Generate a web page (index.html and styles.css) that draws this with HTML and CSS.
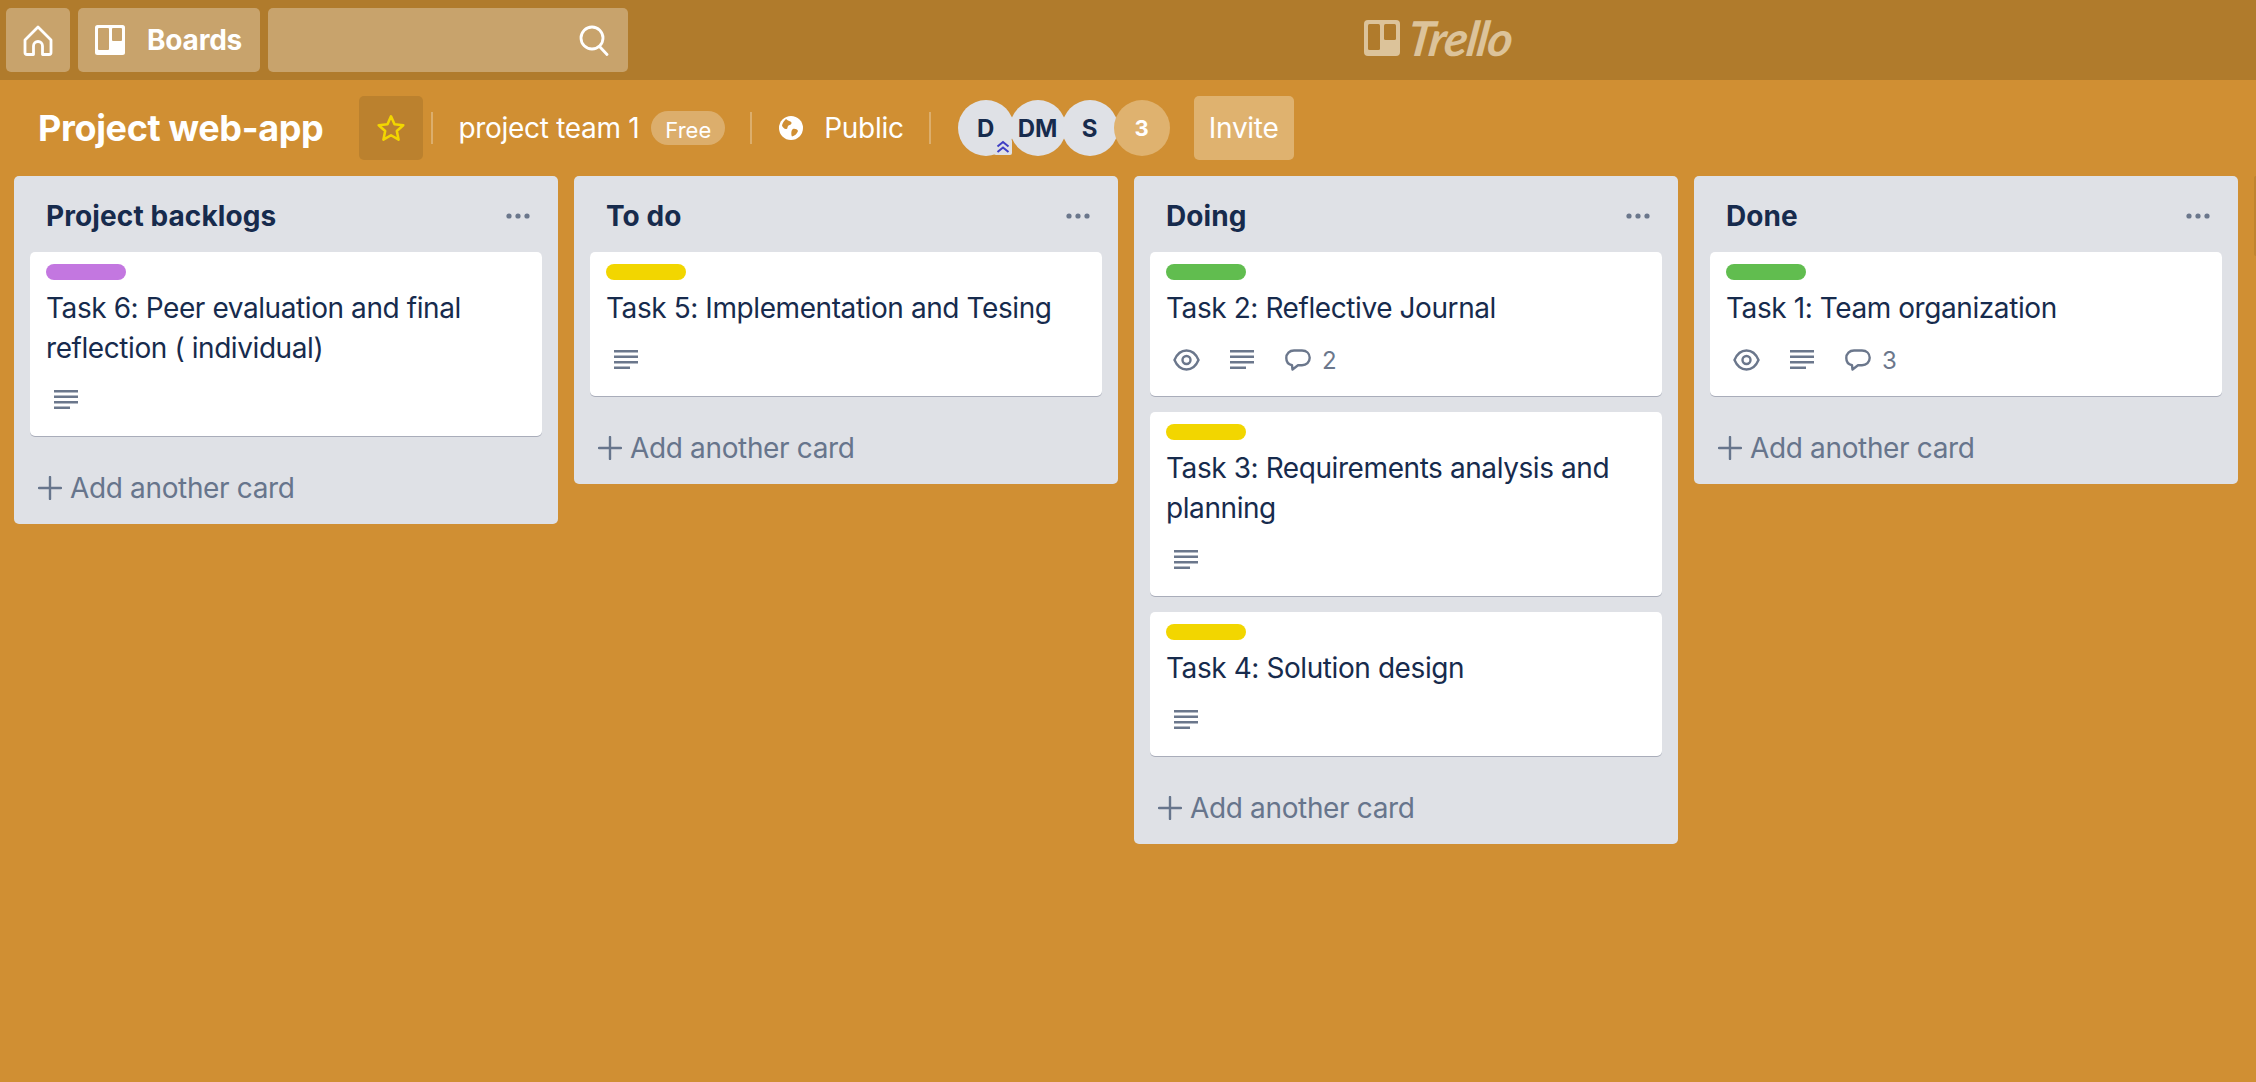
FILE: index.html
```html
<!DOCTYPE html>
<html lang="en">
<head>
    <meta charset="UTF-8">
    <title>Project web-app | Trello</title>
    <link rel="stylesheet" href="styles.css">
</head>
<body>
    <svg class="icon-defs" width="0" height="0">
        <symbol id="i-desc" viewBox="0 0 24 20">
            <path d="M0 1.300h24M0 6.800h24M0 12.300h24M0 17.800h16" fill="none" stroke="currentColor" stroke-width="2.500"/>
        </symbol>
        <symbol id="i-eye" viewBox="0 0 27 22">
            <path d="M1.500 11C4 5 8 1.500 13.500 1.500S23 5 25.500 11C23 17 19 20.500 13.500 20.500S4 17 1.500 11Z" fill="none" stroke="currentColor" stroke-width="2.400"/>
            <circle cx="13.500" cy="11" r="4" fill="none" stroke="currentColor" stroke-width="2.400"/>
        </symbol>
        <symbol id="i-comment" viewBox="0 0 26 22">
            <path d="M7 16.200C3.500 15.500 1.300 12.800 1.300 9C1.300 4.500 4.500 1.500 9 1.500H17C21.500 1.500 24.700 4.500 24.700 8.800C24.700 13 21.500 16.200 17 16.200H13L7.500 20.500Z" fill="none" stroke="currentColor" stroke-width="2.400" stroke-linejoin="round"/>
        </symbol>
        <symbol id="i-plus" viewBox="0 0 24 24">
            <path d="M12 1v22M1 12h22" fill="none" stroke="currentColor" stroke-width="2.400" stroke-linecap="round"/>
        </symbol>
        <symbol id="i-dots" viewBox="0 0 24 6">
            <circle cx="3" cy="3" r="2.600" fill="currentColor"/>
            <circle cx="12" cy="3" r="2.600" fill="currentColor"/>
            <circle cx="21" cy="3" r="2.600" fill="currentColor"/>
        </symbol>
    </svg>

    <header class="topbar">
        <div class="topbar-left">
            <button class="top-btn home-btn">
                <svg class="home-icon" viewBox="0 0 30 31">
                    <path d="M15 2L28 15V27.500C28 28.800 27.200 29.500 26 29.500H19.500V21C19.500 18.500 17.500 16.500 15 16.500S10.500 18.500 10.500 21V29.500H4C2.800 29.500 2 28.800 2 27.500V15Z" fill="none" stroke="currentColor" stroke-width="2.800" stroke-linejoin="round"/>
                </svg>
            </button>
            <button class="top-btn boards-btn">
                <svg class="boards-icon" viewBox="0 0 30 30">
                    <rect width="30" height="30" rx="2.500" fill="#fff"/>
                    <rect x="3" y="3" width="11" height="22" rx="1" fill="#c8a36c"/>
                    <rect x="17" y="3" width="10" height="13" rx="1" fill="#c8a36c"/>
                </svg>
                <span>Boards</span>
            </button>
            <div class="top-search">
                <svg class="search-icon" viewBox="0 0 30 31">
                    <circle cx="13" cy="13" r="11" fill="none" stroke="currentColor" stroke-width="2.800"/>
                    <path d="M21 22L28 29.500" fill="none" stroke="currentColor" stroke-width="2.800" stroke-linecap="round"/>
                </svg>
            </div>
        </div>
        <div class="logo">
            <svg class="logo-mark" viewBox="0 0 36 36">
                <rect width="36" height="36" rx="4" fill="#dcc39a"/>
                <rect x="4" y="4" width="12" height="26" rx="1.500" fill="#b07b2c"/>
                <rect x="20" y="4" width="12" height="16" rx="1.500" fill="#b07b2c"/>
            </svg>
            <span class="logo-text">Trello</span>
        </div>
    </header>

    <section class="board-bar">
        <h1 class="board-title">Project web-app</h1>
        <button class="star-btn">
            <svg class="star-icon" viewBox="0 0 24 24">
                <path d="M12 2L15 8.800L22.500 9.600L17 14.600L18.500 22L12 18.200L5.500 22L7 14.600L1.500 9.600L9 8.800Z" fill="none" stroke="#f2d600" stroke-width="2.200" stroke-linejoin="round"/>
            </svg>
        </button>
        <span class="bar-sep sep-first"></span>
        <span class="bar-text team-name">project team 1</span>
        <span class="free-tag">Free</span>
        <span class="bar-sep"></span>
        <svg class="globe-icon" viewBox="0 0 24 24">
            <circle cx="12" cy="12" r="12" fill="#fff"/>
            <path d="M7 3C9 5 11.500 5 12.500 6.500C13 8 11 9 9.500 9.500C8 10.500 9 12.500 7.500 13C5.500 13.500 3.500 11 3 9.500C3.500 7 5 5 7 3ZM14 13C16 12.500 18.500 13.500 19 15C18 18 15.500 20 13 20.500C12 18.500 12 14 14 13Z" fill="#d08f33"/>
        </svg>
        <span class="bar-text">Public</span>
        <span class="bar-sep"></span>
        <div class="members">
            <span class="avatar">D
                <svg class="admin-badge" viewBox="0 0 18 16">
                    <rect width="18" height="16" rx="2" fill="#dfe1e6"/>
                    <path d="M3.500 7.500L9 3L14.500 7.500M3.500 13L9 8.500L14.500 13" fill="none" stroke="#3f3fc4" stroke-width="2"/>
                </svg>
            </span>
            <span class="avatar">DM</span>
            <span class="avatar">S</span>
            <span class="avatar avatar-more">3</span>
        </div>
        <button class="invite-btn">Invite</button>
    </section>

    <main class="lists">
        <section class="list">
            <div class="list-head">
                <h2>Project backlogs</h2>
                <svg class="dots"><use href="#i-dots"/></svg>
            </div>
            <article class="card">
                <span class="label label-purple"></span>
                <p class="card-title">Task 6: Peer evaluation and final reflection ( individual)</p>
                <div class="badges">
                    <svg class="badge-desc"><use href="#i-desc"/></svg>
                </div>
            </article>
            <div class="add-card">
                <svg class="plus"><use href="#i-plus"/></svg>
                <span>Add another card</span>
            </div>
        </section>

        <section class="list">
            <div class="list-head">
                <h2>To do</h2>
                <svg class="dots"><use href="#i-dots"/></svg>
            </div>
            <article class="card">
                <span class="label label-yellow"></span>
                <p class="card-title">Task 5: Implementation and Tesing</p>
                <div class="badges">
                    <svg class="badge-desc"><use href="#i-desc"/></svg>
                </div>
            </article>
            <div class="add-card">
                <svg class="plus"><use href="#i-plus"/></svg>
                <span>Add another card</span>
            </div>
        </section>

        <section class="list">
            <div class="list-head">
                <h2>Doing</h2>
                <svg class="dots"><use href="#i-dots"/></svg>
            </div>
            <article class="card">
                <span class="label label-green"></span>
                <p class="card-title">Task 2: Reflective Journal</p>
                <div class="badges">
                    <svg class="badge-eye"><use href="#i-eye"/></svg>
                    <svg class="badge-desc"><use href="#i-desc"/></svg>
                    <svg class="badge-comment"><use href="#i-comment"/></svg>
                    <span class="badge-count">2</span>
                </div>
            </article>
            <article class="card">
                <span class="label label-yellow"></span>
                <p class="card-title">Task 3: Requirements analysis and planning</p>
                <div class="badges">
                    <svg class="badge-desc"><use href="#i-desc"/></svg>
                </div>
            </article>
            <article class="card">
                <span class="label label-yellow"></span>
                <p class="card-title">Task 4: Solution design</p>
                <div class="badges">
                    <svg class="badge-desc"><use href="#i-desc"/></svg>
                </div>
            </article>
            <div class="add-card">
                <svg class="plus"><use href="#i-plus"/></svg>
                <span>Add another card</span>
            </div>
        </section>

        <section class="list">
            <div class="list-head">
                <h2>Done</h2>
                <svg class="dots"><use href="#i-dots"/></svg>
            </div>
            <article class="card">
                <span class="label label-green"></span>
                <p class="card-title">Task 1: Team organization</p>
                <div class="badges">
                    <svg class="badge-eye"><use href="#i-eye"/></svg>
                    <svg class="badge-desc"><use href="#i-desc"/></svg>
                    <svg class="badge-comment"><use href="#i-comment"/></svg>
                    <span class="badge-count">3</span>
                </div>
            </article>
            <div class="add-card">
                <svg class="plus"><use href="#i-plus"/></svg>
                <span>Add another card</span>
            </div>
        </section>

        <div class="add-list"></div>
    </main>
</body>
</html>
```

FILE: styles.css
```css
* {
    box-sizing: border-box;
}
html, body {
    height: 100%;
}
body {
    margin: 0;
    background-color: #d08f33;
    font-family: Inter, "Liberation Sans", sans-serif;
    color: #172b4d;
    overflow: hidden;
}
button {
    font-family: inherit;
    border: none;
    padding: 0;
    color: #fff;
}
.icon-defs {
    position: absolute;
}

/* top bar */
.topbar {
    height: 80px;
    background-color: #b07b2c;
    padding: 8px 6px 0;
    position: relative;
    display: flex;
    color: #fff;
}
.topbar-left {
    display: flex;
    gap: 8px;
    height: 64px;
}
.top-btn {
    background-color: #c8a36c;
    border-radius: 5px;
    display: flex;
    align-items: center;
    height: 64px;
}
.home-btn {
    width: 64px;
    justify-content: center;
}
.home-icon {
    width: 30px;
    height: 31px;
}
.boards-btn {
    width: 182px;
    padding-left: 17px;
    font-weight: 700;
}
.boards-icon {
    width: 30px;
    height: 30px;
    margin-right: 22px;
    flex: none;
}
.boards-btn span {
    font-size: 28px;
    letter-spacing: -0.2px;
}
.top-search {
    width: 360px;
    background-color: #c8a36c;
    border-radius: 5px;
    display: flex;
    align-items: center;
    justify-content: flex-end;
    padding-right: 19px;
}
.search-icon {
    width: 30px;
    height: 31px;
}
.logo {
    position: absolute;
    left: 1364px;
    top: 20px;
    display: flex;
    align-items: center;
    gap: 8px;
}
.logo-mark {
    width: 36px;
    height: 36px;
}
.logo-text {
    font-family: Lato, "Liberation Sans", sans-serif;
    font-style: italic;
    font-weight: 700;
    font-size: 48px;
    line-height: 36px;
    letter-spacing: -1px;
    color: #dcc39a;
    transform: skewX(-8deg);
}

/* board header */
.board-bar {
    height: 96px;
    padding: 16px 0 16px 38px;
    display: flex;
    align-items: center;
    color: #fff;
}
.board-title {
    margin: 0 36px 0 0;
    font-size: 36px;
    font-weight: 700;
    letter-spacing: -0.35px;
}
.star-btn {
    width: 64px;
    height: 64px;
    background-color: #bb812e;
    border-radius: 5px;
    display: flex;
    align-items: center;
    justify-content: center;
}
.star-icon {
    width: 28px;
    height: 28px;
}
.bar-sep {
    width: 2px;
    height: 32px;
    background-color: #dcae6c;
    margin: 0 27px 0 25px;
}
.sep-first {
    margin: 0 25px 0 8px;
}
.bar-text {
    font-size: 28px;
    letter-spacing: -0.3px;
}
.free-tag {
    margin-left: 12px;
    background-color: #dcae6c;
    border-radius: 17px;
    height: 34px;
    padding: 0 14px;
    font-size: 22px;
    line-height: 38px;
}
.globe-icon {
    width: 24px;
    height: 24px;
    margin-right: 21px;
}
.members {
    display: flex;
}
.avatar {
    width: 56px;
    height: 56px;
    border-radius: 50%;
    background-color: #dfe1e6;
    color: #172b4d;
    font-size: 24px;
    font-weight: 700;
    display: flex;
    align-items: center;
    justify-content: center;
    position: relative;
    margin-right: -4px;
}
.avatar-more {
    background-color: #dfb26f;
    color: #fff;
    font-size: 22px;
    margin-right: 0;
}
.admin-badge {
    position: absolute;
    right: 2px;
    bottom: 1px;
    width: 18px;
    height: 16px;
    z-index: 1;
}
.invite-btn {
    margin-left: 24px;
    width: 100px;
    height: 64px;
    background-color: #dfb26f;
    border-radius: 5px;
    font-size: 28px;
    letter-spacing: -0.3px;
}

/* lists */
.lists {
    display: flex;
    align-items: flex-start;
    gap: 16px;
    padding: 0 0 0 14px;
}
.list {
    width: 544px;
    flex: none;
    background-color: #dfe1e6;
    border-radius: 5px;
    padding: 0 16px;
}
.list-head {
    display: flex;
    justify-content: space-between;
    align-items: center;
    height: 76px;
    padding: 4px 12px 0 16px;
}
.list-head h2 {
    margin: 0;
    font-size: 28px;
    font-weight: 700;
    letter-spacing: 0.1px;
}
.dots {
    width: 24px;
    height: 6px;
    color: #6b778c;
}
.card {
    display: block;
    background-color: #fff;
    border-radius: 5px;
    box-shadow: 0 1px 0 #a9adba;
    padding: 12px 16px 16px;
    margin-bottom: 16px;
}
.label {
    display: block;
    width: 80px;
    height: 16px;
    border-radius: 8px;
}
.label-purple { background-color: #c377e0; }
.label-yellow { background-color: #f2d600; }
.label-green { background-color: #61bd4f; }
.card-title {
    margin: 8px 0 0;
    font-size: 28px;
    line-height: 40px;
    letter-spacing: -0.42px;
}
.badges {
    display: flex;
    align-items: center;
    height: 40px;
    margin-top: 12px;
    padding-left: 7px;
    color: #6b778c;
}
.badge-desc {
    width: 24px;
    height: 20px;
}
.badge-desc:first-child {
    margin-left: 1px;
}
.badge-eye {
    width: 27px;
    height: 22px;
    margin-right: 30px;
}
.badge-comment {
    width: 26px;
    height: 22px;
    margin-left: 31px;
    margin-right: 11px;
}
.badge-count {
    font-size: 24px;
}
.add-card {
    display: flex;
    align-items: center;
    height: 48px;
    margin: 28px 0 12px;
    color: #67758c;
    font-size: 28px;
    letter-spacing: -0.35px;
}
.plus {
    width: 24px;
    height: 24px;
    margin-left: 8px;
    margin-right: 8px;
}
.add-list {
    width: 2px;
    height: 80px;
    flex: none;
    background-color: #c0842f;
    border-radius: 2px 0 0 2px;
}
```
